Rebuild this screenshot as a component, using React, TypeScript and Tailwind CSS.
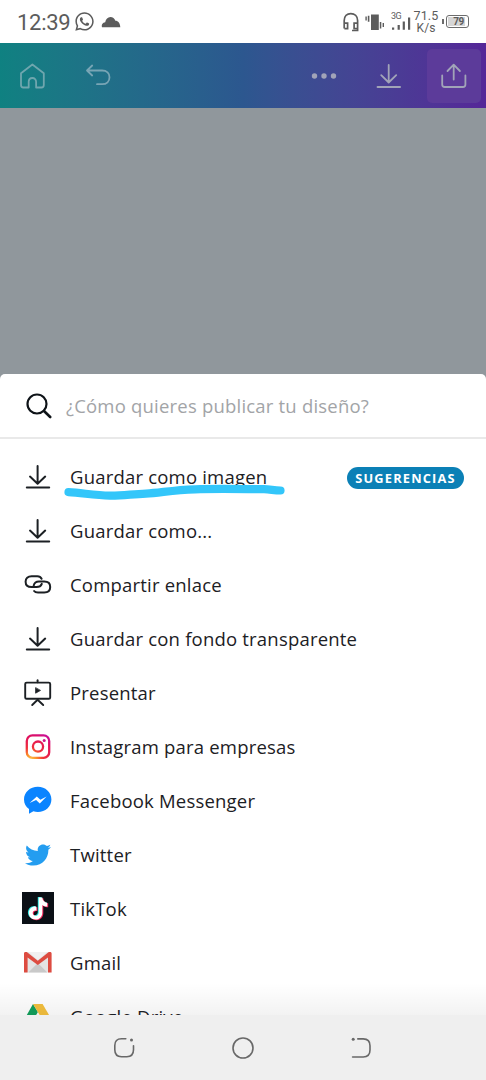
import type { ReactNode } from "react";
import { FaTwitter, FaWhatsapp } from "react-icons/fa";

function DownloadIcon() {
  return (
    <svg viewBox="0 0 32 32" className="size-8" fill="none" stroke="currentColor" strokeWidth="2" strokeLinecap="round" strokeLinejoin="round">
      <path d="M15.6 6v17.6M8 16.6l7.6 7.2 7.6-7.2M4.8 27.5h22.4" />
    </svg>
  );
}

function LinkIcon() {
  return (
    <svg viewBox="0 0 32 32" className="size-8" fill="none" stroke="currentColor" strokeWidth="2" strokeLinecap="round">
      <path d="M19.600 10.800C18.800 9.200 17.400 8.300 15.400 8.300H9.600C5.800 8.300 3.600 10.400 3.600 13.700s2.200 5.400 6 5.400h5c2.600 0 4.400-1.100 5.200-3.200" />
      <path d="M11.700 17.600c.6-2.500 2.400-4 5.200-4h5.300c3.800 0 6 2.200 6 5.400s-2.200 5.500-6 5.500h-6.200c-1.800 0-3.100-.4-3.900-1.500" />
    </svg>
  );
}

function PresentIcon() {
  return (
    <svg viewBox="0 0 32 32" className="size-8" fill="none" stroke="currentColor" strokeWidth="1.9" strokeLinecap="round" strokeLinejoin="round">
      <path d="M15.6 4.300v2" />
      <rect x="3.2" y="6.6" width="25" height="16.2" rx="1.4" />
      <path d="M10.200 29l5.400-5.200 5.600 5.200" />
      <path d="M13.600 12v5.200l4.600-2.600z" fill="currentColor" strokeWidth="0.8" />
    </svg>
  );
}

function InstagramIcon() {
  return (
    <svg viewBox="0 0 32 32" className="size-8" fill="none">
      <defs>
        <radialGradient id="ig" gradientUnits="userSpaceOnUse" cx="9" cy="30" r="30">
          <stop offset="0" stopColor="#ffc94a" />
          <stop offset="0.2" stopColor="#fb8c28" />
          <stop offset="0.42" stopColor="#f0303c" />
          <stop offset="0.78" stopColor="#e0105c" />
          <stop offset="1" stopColor="#c40fa4" />
        </radialGradient>
      </defs>
      <g stroke="url(#ig)" strokeWidth="2.3">
        <rect x="4.8" y="5.4" width="22.4" height="22.4" rx="5.6" />
        <circle cx="16" cy="16.6" r="5.1" />
      </g>
      <circle cx="22.2" cy="10.4" r="1.5" fill="#d01286" />
    </svg>
  );
}

function MessengerIcon() {
  return (
    <svg viewBox="0 0 32 32" className="size-8">
      <path
        d="M15.800 2.800C8.100 2.800 2 8.300 2 15.400c0 4 1.900 7.400 5 9.700v4.600l4.400-2.400c1.400.4 2.800.6 4.400.6 7.600 0 13.600-5.400 13.600-12.500S23.400 2.800 15.800 2.800z"
        fill="#0a84ff"
      />
      <path d="M7.600 19l7.200-6.600 3.600 3.400 6.200-3.400-6.800 7-3.700-3.500z" fill="#fff" />
    </svg>
  );
}

const NOTE = "M17.100 5.400h3.600c.2 3 2 4.900 4.900 5.100v3.900c-1.900 0-3.500-.5-4.900-1.500v7.600c0 4.200-3.100 6.900-6.800 6.900-3.800 0-6.700-2.900-6.700-6.500 0-4.100 3.500-7 7.600-6.400v3.900c-2.100-.5-3.700.6-3.700 2.500 0 1.500 1.200 2.700 2.800 2.700 1.800 0 3.200-1.200 3.200-3.100z";

function TikTokIcon() {
  return (
    <svg viewBox="0 0 32 32" className="size-8 bg-[#0b1016]">
      <path d={NOTE} fill="#25e5df" transform="translate(-1.3 -.4)" />
      <path d={NOTE} fill="#f5265b" transform="translate(.6 .8)" />
      <path d={NOTE} fill="#fff" transform="translate(-.4 .2)" />
    </svg>
  );
}

function GmailIcon() {
  return (
    <svg viewBox="0 0 32 32" className="size-8">
      <path d="M3 6h25.500v20.400H3z" fill="#e4e4e4" />
      <path d="M6.300 26.400L15.800 17l9.500 9.400z" fill="#c9c9c9" />
      <path d="M6.300 6h19l-9.500 8z" fill="#f1f1f1" />
      <path d="M2 7.500C2 6.500 2.600 6 3.600 6h1.200l11 8.700 11-8.700h1.200c1 0 1.600.5 1.600 1.500v18.900h-3.600V11.600l-10.200 7.500L5.600 11.600v14.800H2z" fill="#dd4c41" />
    </svg>
  );
}

function DriveIcon() {
  return (
    <svg viewBox="0 0 32 32" className="size-8">
      <path d="M11 4L2 20l4.600 8 9.300-16z" fill="#12a05c" />
      <path d="M11 4h9.600L30 20h-9.300z" fill="#f4c03e" />
      <path d="M11.300 20H30l-4.600 8H6.600z" fill="#4285f4" />
    </svg>
  );
}

type Item = { label: string; icon: ReactNode; badge?: string };

const ITEMS: Item[] = [
  { label: "Guardar como imagen", icon: <DownloadIcon />, badge: "SUGERENCIAS" },
  { label: "Guardar como...", icon: <DownloadIcon /> },
  { label: "Compartir enlace", icon: <LinkIcon /> },
  { label: "Guardar con fondo transparente", icon: <DownloadIcon /> },
  { label: "Presentar", icon: <PresentIcon /> },
  { label: "Instagram para empresas", icon: <InstagramIcon /> },
  { label: "Facebook Messenger", icon: <MessengerIcon /> },
  { label: "Twitter", icon: <FaTwitter className="size-[26px] mt-0.5 text-[#249df0]" /> },
  { label: "TikTok", icon: <TikTokIcon /> },
  { label: "Gmail", icon: <GmailIcon /> },
  { label: "Google Drive", icon: <DriveIcon /> },
];

function StatusBar() {
  return (
    <div className="h-[43px] shrink-0 flex items-center pl-[17px] pr-[17px] text-[#5c5c5c] font-[Roboto,sans-serif]">
      <span className="text-[22px] leading-none w-[53px] tracking-[-0.3px] whitespace-nowrap pt-0.5">12:39</span>
      <FaWhatsapp className="size-[21px] ml-1" />
      <svg viewBox="0 0 20 12" className="w-5 h-3 ml-1.5" fill="currentColor">
        <path d="M1 11.300C.2 8.500 1.800 6.600 4.200 6.200 4.800 3 6.800.9 9.400.9c2.400 0 4.200 1.400 5 3.800 2.800 0 4.800 2.600 4.900 6.600z" />
      </svg>
      <svg viewBox="0 0 18 20" className="w-[18px] h-5 ml-auto" fill="none" stroke="currentColor" strokeWidth="1.7">
        <path d="M2.200 16.500V8.500C2.200 4 5 1.600 8.800 1.600s6.800 2.400 6.800 6.900v10H10" />
        <path d="M2.400 11.200h3.200v5.400H2.400M15.400 11.200h-3.300v5.400h3.300" />
      </svg>
      <svg viewBox="0 0 20 18" className="w-5 h-[18px] ml-[5px]" fill="currentColor">
        <path d="M.4 3.500h1.400v4H.4zM2.800 2.800h1.600v6H2.800zM6 1.500h7.800v15.500H6zM14.800 9h1.500v6.500h-1.500zM17.600 10h1.400v4h-1.400z" />
      </svg>
      <div className="flex flex-col w-5 ml-1.5 -mt-0.5">
        <span className="text-[9px] leading-[8px] tracking-[-0.5px]">3G</span>
        <svg viewBox="0 0 20 13" className="w-5 h-[13px] -mt-[3px] ml-px" fill="currentColor">
          <path d="M0 10.500h2.200v2.300H0zM5.600 8h2.200v4.800H5.600zM10.700 4.500h2.200v8.300h-2.200zM16 .6h2.200v12.200H16z" />
        </svg>
      </div>
      <div className="flex flex-col items-center text-[12.500px] leading-[13px] tracking-[0.1px] ml-[3px] w-6">
        <span>71.5</span>
        <span className="text-[12px]">K/s</span>
      </div>
      <span className="w-[2px] h-[5px] bg-[#6c6c6c] ml-[4px]" />
      <span className="ml-0.5 w-[23px] h-[13px] rounded-[3px] border border-[#6c6c6c] p-px">
        <span className="block w-[17px] h-full bg-[#d6d6d6] text-[10px] leading-[10px] font-bold text-right pr-px tracking-[-0.3px]">79</span>
      </span>
    </div>
  );
}

function EditorBar() {
  return (
    <div className="h-[65px] shrink-0 bg-linear-to-r from-[#0f8181] via-[#2c578f] to-[#552698] text-[#a1a4b8] pr-[5px] pt-[5px] pb-[5px] flex items-center">
      <svg viewBox="0 0 26 26" className="size-[26px] ml-[19px] text-[#6fa6ae]" fill="none" stroke="currentColor" strokeWidth="1.800" strokeLinejoin="round">
        <path d="M2 10.300L13.400 1.500l11.400 8.800V22c0 1.500-.8 2.500-2.300 2.500h-5.400v-5.700c0-2.300-1.500-3.800-3.700-3.800s-3.700 1.500-3.700 3.800v5.700H4.300C2.800 24.500 2 23.500 2 22z" />
      </svg>
      <svg viewBox="0 0 26 22" className="w-[26px] h-[22px] ml-10 -mt-0.5 text-[#78a5b5]" fill="none" stroke="currentColor" strokeWidth="1.800" strokeLinecap="round" strokeLinejoin="round">
        <path d="M7.200 1.500L2 6.500l5.200 5M2.400 6.500h14.700c4.600 0 7.400 2.800 7.400 6.800s-2.800 6.900-7.400 6.900H12" />
      </svg>
      <svg viewBox="0 0 26 6" className="w-[26px] h-1.5 ml-[200px]" fill="currentColor">
        <circle cx="3.500" cy="3" r="2.700" />
        <circle cx="13" cy="3" r="2.700" />
        <circle cx="22.500" cy="3" r="2.700" />
      </svg>
      <svg viewBox="0 0 26 26" className="size-[26px] ml-[39px]" fill="none" stroke="currentColor" strokeWidth="1.800" strokeLinecap="round" strokeLinejoin="round">
        <path d="M12.700 2v17M5.200 12.200l7.500 7.300 7.500-7.300M1.500 24h22.600" />
      </svg>
      <div className="ml-auto size-[54px] rounded-[5px] bg-[#5c3b9a] flex items-center justify-center">
        <svg viewBox="0 0 26 26" className="size-[26px]" fill="none" stroke="currentColor" strokeWidth="1.800" strokeLinecap="round" strokeLinejoin="round">
          <path d="M12.700 16.500V2M6.500 8l6.200-6.300L18.900 8M1.200 12.500v9c0 1.600.8 2.500 2.500 2.500h18.200c1.700 0 2.500-.9 2.500-2.500v-9" />
        </svg>
      </div>
    </div>
  );
}

function PublishSheet() {
  return (
    <div className="flex-1 min-h-0 overflow-hidden bg-white rounded-t-[5px] flex flex-col relative">
      <div className="h-[65px] shrink-0 border-b-2 border-[#e9e9e9] flex items-center pl-[26px]">
        <svg viewBox="0 0 26 26" className="size-[26px]" fill="none" stroke="#0e1318" strokeWidth="2.200" strokeLinecap="round">
          <circle cx="11" cy="11" r="9.500" />
          <path d="M18 18l6.200 6" strokeWidth="2.600" />
        </svg>
        <span className="ml-3.5 text-[18.500px] tracking-[0.2px] leading-6 text-[#a2a4a7] whitespace-nowrap">¿Cómo quieres publicar tu diseño?</span>
      </div>
      <ul className="pt-2.5">
        {ITEMS.map((item) => (
          <li key={item.label} className="h-[54px] flex items-center gap-4 px-[22px]">
            <span className="size-8 shrink-0 flex items-center justify-center">{item.icon}</span>
            <span className="text-[18.500px] leading-6 tracking-[0.2px] whitespace-nowrap pt-px">{item.label}</span>
            {item.badge && (
              <span className="ml-auto mt-1 w-[117px] h-[22px] rounded-full bg-[#0b80b6] text-white text-[12.800px] font-bold tracking-[1.200px] leading-[22px] text-center">
                {item.badge}
              </span>
            )}
          </li>
        ))}
      </ul>
      {/* marker stroke under the first option */}
      <svg viewBox="0 0 222 18" className="absolute left-[64px] top-[109px] w-[222px] h-[18px]" fill="none" stroke="#33c6fa" strokeLinecap="round" strokeLinejoin="round">
        <path d="M4.500 9.200C18 9.800 30 12.400 46 12.600c14 .1 22-1.600 36-2 14-.6 26-3.600 49-4.300C150 5.600 172 6 200 6.200c6 0 10 1.300 16.500 1.300" strokeWidth="8.200" />
      </svg>
      <div className="absolute inset-x-0 bottom-0 h-8 bg-linear-to-b from-transparent to-black/5" />
    </div>
  );
}

function NavBar() {
  return (
    <div className="h-[65px] shrink-0 bg-[#efefef] text-[#686868] flex items-center justify-between pl-[113px] pr-[114px]">
      <svg viewBox="0 0 22 22" className="size-[22px]" fill="none" stroke="currentColor" strokeWidth="1.600" strokeLinecap="round">
        <path d="M12.800 1.800H8.500C4 1.800 1.800 4 1.800 8.500v4.300c0 4.500 2.200 6.900 6.700 6.900h5.300c4.500 0 6.700-2.400 6.700-6.900V8.800" />
        <circle cx="18.500" cy="3" r="1.500" fill="currentColor" stroke="none" />
      </svg>
      <svg viewBox="0 0 24 24" className="size-6" fill="none" stroke="currentColor" strokeWidth="1.600">
        <circle cx="12" cy="12" r="10" />
      </svg>
      <svg viewBox="0 0 22 22" className="size-[22px]" fill="none" stroke="currentColor" strokeWidth="1.600" strokeLinecap="round">
        <path d="M7.800 1.900h5.400c4.500 0 6.800 2.300 6.800 6.800v4.400c0 4.500-2.300 6.900-6.800 6.900H2.600" />
        <circle cx="3.200" cy="2.200" r="1.500" fill="currentColor" stroke="none" />
      </svg>
    </div>
  );
}

export default function App() {
  return (
    <div className="w-[486px] h-[1080px] overflow-hidden flex flex-col bg-white text-[#1c2024] font-['Open_Sans',sans-serif]">
      <StatusBar />
      <div className="flex-1 min-h-0 flex flex-col bg-[#90979c]">
        <EditorBar />
        <div className="h-[266px] shrink-0" />
        <PublishSheet />
      </div>
      <NavBar />
    </div>
  );
}
